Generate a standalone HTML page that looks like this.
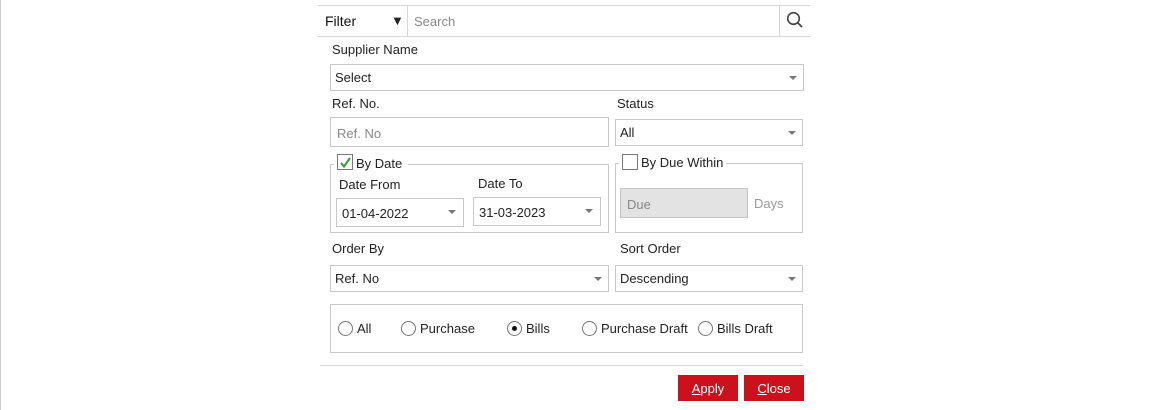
<!DOCTYPE html>
<html><head><meta charset="utf-8"><style>
*{box-sizing:border-box;margin:0;padding:0}
body{width:1166px;height:410px;background:#fff;position:relative;overflow:hidden;font-family:"Liberation Sans",sans-serif;font-size:13px;color:#222}
.a{position:absolute}
.box{position:absolute;border:1px solid #c8c8c8;background:#fff}
.t{position:absolute;white-space:nowrap;line-height:16px;margin-top:1px}
.arr{position:absolute;width:0;height:0;border-left:4px solid transparent;border-right:4px solid transparent;border-top:4px solid #777}
.rad{position:absolute;width:15px;height:15px;border:1px solid #777;border-radius:50%;background:#fff}
.btn{position:absolute;background:#cc111c;color:#fff;text-align:center;line-height:28px;font-size:13px;height:26px;width:60px}
</style></head><body>
<div class="a" style="left:0;top:0;width:1px;height:410px;background:#d0d0d0"></div>
<div class="a" style="left:318px;top:5px;width:492px;height:1px;background:#d6d6d6"></div>
<div class="a" style="left:318px;top:36px;width:492px;height:1px;background:#d6d6d6"></div>
<div class="a" style="left:407px;top:5px;width:1px;height:31px;background:#d6d6d6"></div>
<div class="a" style="left:779px;top:5px;width:1px;height:31px;background:#d6d6d6"></div>
<div class="t" style="left:325px;top:12px;font-size:14px;color:#111">Filter</div>
<div class="t" style="left:391px;top:12px;font-size:13px;color:#222">▼</div>
<div class="t" style="left:414px;top:13px;color:#888">Search</div>
<svg class="a" style="left:786px;top:11px" width="18" height="18" viewBox="0 0 18 18"><circle cx="7.5" cy="7.5" r="5.8" fill="none" stroke="#444" stroke-width="1.6"/><line x1="11.7" y1="11.7" x2="16" y2="16" stroke="#444" stroke-width="1.8"/></svg>

<div class="t" style="left:332px;top:41px">Supplier Name</div>
<div class="box" style="left:330px;top:64px;width:474px;height:27px"></div>
<div class="t" style="left:335px;top:69px">Select</div>
<div class="arr" style="left:789px;top:76px"></div>

<div class="t" style="left:332px;top:95px">Ref. No.</div>
<div class="box" style="left:330px;top:117px;width:279px;height:30px"></div>
<div class="t" style="left:337px;top:125px;color:#888">Ref. No</div>
<div class="t" style="left:617px;top:95px">Status</div>
<div class="box" style="left:615px;top:119px;width:188px;height:27px"></div>
<div class="t" style="left:620px;top:124px">All</div>
<div class="arr" style="left:788px;top:131px"></div>

<div class="box" style="left:330px;top:164px;width:279px;height:69px"></div>
<div class="a" style="left:334px;top:156px;width:74px;height:14px;background:#fff"></div>
<div class="box" style="left:337px;top:154px;width:16px;height:16px;border-color:#777"></div>
<svg class="a" style="left:339px;top:156px" width="13" height="13" viewBox="0 0 13 13"><path d="M2 7 L5 10.5 L11 2" fill="none" stroke="#3a9a3a" stroke-width="2"/></svg>
<div class="t" style="left:356px;top:155px">By Date</div>
<div class="t" style="left:339px;top:176px">Date From</div>
<div class="t" style="left:478px;top:175px">Date To</div>
<div class="box" style="left:336px;top:198px;width:128px;height:29px"></div>
<div class="t" style="left:342px;top:205px">01-04-2022</div>
<div class="arr" style="left:448px;top:210px"></div>
<div class="box" style="left:473px;top:197px;width:128px;height:29px"></div>
<div class="t" style="left:479px;top:204px">31-03-2023</div>
<div class="arr" style="left:585px;top:209px"></div>

<div class="box" style="left:615px;top:163px;width:188px;height:70px"></div>
<div class="a" style="left:619px;top:155px;width:107px;height:14px;background:#fff"></div>
<div class="box" style="left:622px;top:154px;width:16px;height:16px;border-color:#777"></div>
<div class="t" style="left:641px;top:154px">By Due Within</div>
<div class="box" style="left:620px;top:188px;width:128px;height:30px;background:#e3e3e3;border-color:#c4c4c4"></div>
<div class="t" style="left:627px;top:196px;color:#888">Due</div>
<div class="t" style="left:754px;top:195px;color:#999">Days</div>

<div class="t" style="left:332px;top:240px">Order By</div>
<div class="box" style="left:330px;top:265px;width:279px;height:27px"></div>
<div class="t" style="left:335px;top:270px">Ref. No</div>
<div class="arr" style="left:594px;top:277px"></div>
<div class="t" style="left:620px;top:240px">Sort Order</div>
<div class="box" style="left:615px;top:265px;width:188px;height:27px"></div>
<div class="t" style="left:620px;top:270px">Descending</div>
<div class="arr" style="left:788px;top:277px"></div>

<div class="box" style="left:330px;top:304px;width:473px;height:49px"></div>
<div class="rad" style="left:338px;top:321px"></div><div class="t" style="left:357px;top:320px">All</div>
<div class="rad" style="left:401px;top:321px"></div><div class="t" style="left:420px;top:320px">Purchase</div>
<div class="rad" style="left:507px;top:321px"></div><div class="a" style="left:512px;top:326px;width:5px;height:5px;border-radius:50%;background:#111"></div><div class="t" style="left:526px;top:320px">Bills</div>
<div class="rad" style="left:582px;top:321px"></div><div class="t" style="left:601px;top:320px">Purchase Draft</div>
<div class="rad" style="left:698px;top:321px"></div><div class="t" style="left:717px;top:320px">Bills Draft</div>

<div class="a" style="left:320px;top:365px;width:483px;height:1px;background:#d6d6d6"></div>
<div class="btn" style="left:678px;top:375px"><u>A</u>pply</div>
<div class="btn" style="left:744px;top:375px"><u>C</u>lose</div>
</body></html>
